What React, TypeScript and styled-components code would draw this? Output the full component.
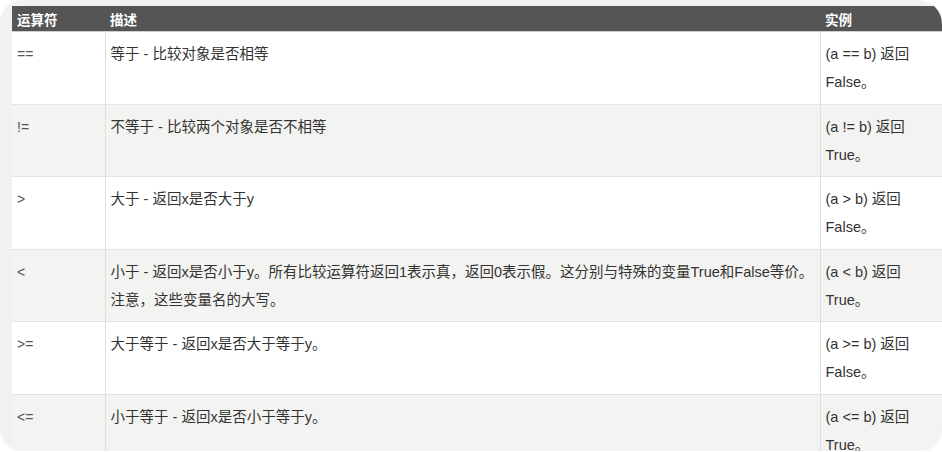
import React from 'react';
import styled, { createGlobalStyle } from 'styled-components';

const GlobalStyle = createGlobalStyle`
    html, body {
        margin: 0;
        padding: 0;
        background: #ffffff;
    }
    body {
        font-family: "Liberation Sans", "Noto Sans CJK SC", sans-serif;
    }
`;

const Card = styled.div`
    width: 942px;
    height: 451px;
    box-sizing: border-box;
    padding: 6px 0 0 12px;
    background-color: #f1f1f1;
    border-radius: 24px;
    overflow: hidden;
    box-shadow: 0 1px 4px rgba(0, 0, 0, 0.06);
`;

const Table = styled.table`
    width: 930px;
    table-layout: fixed;
    border-collapse: collapse;
    font-size: 14.5px;
    color: #333;
`;

const HeadCell = styled.th`
    height: 25px;
    padding: 0 5px;
    background-color: #555555;
    color: #ffffff;
    font-size: 13.5px;
    font-weight: 700;
    text-align: left;
    border-bottom: 1px solid #cfcfcf;
`;

const Row = styled.tr<{ $alt?: boolean }>`
    background-color: ${({ $alt }) => ($alt ? '#f3f3f1' : '#ffffff')};
    border-top: 1px solid #e4e4e4;
`;

const Cell = styled.td<{ $muted?: boolean }>`
    padding: 8px 5px 7.5px;
    line-height: 28px;
    vertical-align: top;
    white-space: pre-line;
    color: ${({ $muted }) => ($muted ? '#555' : '#333')};
    font-size: ${({ $muted }) => ($muted ? '14px' : '14.5px')};
    border-left: 1px solid #dedede;

    &:first-child {
        border-left: none;
    }
`;

const rows = [
    { op: '==', desc: '等于 - 比较对象是否相等', example: '(a == b) 返回 False。' },
    { op: '!=', desc: '不等于 - 比较两个对象是否不相等', example: '(a != b) 返回 True。' },
    { op: '>', desc: '大于 - 返回x是否大于y', example: '(a > b) 返回 False。' },
    {
        op: '<',
        desc: '小于 - 返回x是否小于y。所有比较运算符返回1表示真，返回0表示假。这分别与特殊的变量True和False等价。\n注意，这些变量名的大写。',
        example: '(a < b) 返回 True。',
    },
    { op: '>=', desc: '大于等于 - 返回x是否大于等于y。', example: '(a >= b) 返回 False。' },
    { op: '<=', desc: '小于等于 - 返回x是否小于等于y。', example: '(a <= b) 返回 True。' },
];

const App = () => {
    return (
        <>
            <GlobalStyle />
            <Card>
                <Table>
                    <colgroup>
                        <col style={{ width: 93 }} />
                        <col style={{ width: 715 }} />
                        <col style={{ width: 122 }} />
                    </colgroup>
                    <thead>
                        <tr>
                            <HeadCell>运算符</HeadCell>
                            <HeadCell>描述</HeadCell>
                            <HeadCell>实例</HeadCell>
                        </tr>
                    </thead>
                    <tbody>
                        {rows.map((r, i) => (
                            <Row key={r.op} $alt={i % 2 === 1}>
                                <Cell $muted>{r.op}</Cell>
                                <Cell>{r.desc}</Cell>
                                <Cell>{r.example}</Cell>
                            </Row>
                        ))}
                    </tbody>
                </Table>
            </Card>
        </>
    );
};

export default App;
